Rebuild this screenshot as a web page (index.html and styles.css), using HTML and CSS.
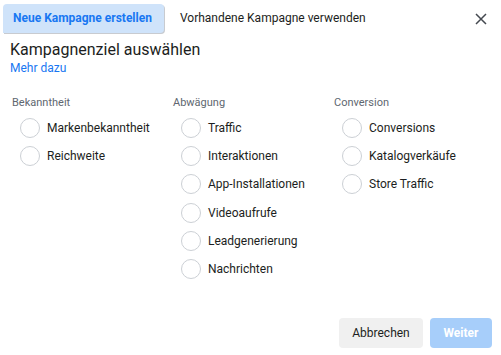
FILE: index.html
```html
<!DOCTYPE html>
<html lang="de">
<head>
<meta charset="utf-8">
<link rel="stylesheet" href="styles.css">
</head>
<body>
<div class="dialog">
  <div class="header">
    <div class="tab active">Neue Kampagne erstellen</div>
    <div class="tab">Vorhandene Kampagne verwenden</div>
    <div class="close">
      <svg width="12" height="12" viewBox="0 0 12 12"><path d="M1 1 L11 11 M11 1 L1 11" stroke="#444950" stroke-width="1.5" fill="none"/></svg>
    </div>
  </div>
  <div class="title">Kampagnenziel auswählen</div>
  <a class="more">Mehr dazu</a>
  <div class="columns">
    <div class="col">
      <div class="label">Bekanntheit</div>
      <div class="opt"><span class="radio"></span>Markenbekanntheit</div>
      <div class="opt"><span class="radio"></span>Reichweite</div>
    </div>
    <div class="col">
      <div class="label">Abwägung</div>
      <div class="opt"><span class="radio"></span>Traffic</div>
      <div class="opt"><span class="radio"></span>Interaktionen</div>
      <div class="opt"><span class="radio"></span>App-Installationen</div>
      <div class="opt"><span class="radio"></span>Videoaufrufe</div>
      <div class="opt"><span class="radio"></span>Leadgenerierung</div>
      <div class="opt"><span class="radio"></span>Nachrichten</div>
    </div>
    <div class="col">
      <div class="label">Conversion</div>
      <div class="opt"><span class="radio"></span>Conversions</div>
      <div class="opt"><span class="radio"></span>Katalogverkäufe</div>
      <div class="opt"><span class="radio"></span>Store Traffic</div>
    </div>
  </div>
  <div class="footer">
    <button class="btn cancel">Abbrechen</button>
    <button class="btn next">Weiter</button>
  </div>
</div>
</body>
</html>
```
FILE: styles.css
```css
html, body {
  margin: 0;
  padding: 0;
  background: #fff;
}
body {
  font-family: Roboto, "Liberation Sans", sans-serif;
  color: #1c1e21;
  width: 501px;
  height: 355px;
  overflow: hidden;
}
.dialog {
  display: flex;
  flex-direction: column;
  height: 355px;
}
.header {
  display: flex;
  align-items: center;
  padding: 4px 0 0 3px;
  height: 29px;
}
.tab {
  height: 29px;
  line-height: 29px;
  font-size: 12px;
  padding: 0 16px;
  color: #1c1e21;
}
.tab.active {
  background: #cfe3fa;
  color: #1877f2;
  font-weight: bold;
  padding: 0 12px 0 10px;
  border-radius: 4px 4px 4px 0;
  box-shadow: 1px 1px 0 #c8cbd0;
}
.close {
  margin-left: auto;
  margin-right: 14px;
  display: flex;
  align-items: center;
}
.title {
  font-size: 16px;
  padding: 7px 0 0 10px;
  line-height: 20px;
}
.more {
  font-size: 12px;
  color: #1877f2;
  padding-left: 10px;
  line-height: 16px;
  font-weight: 400;
}
.columns {
  display: flex;
  padding: 20px 0 0 12px;
}
.col {
  width: 161px;
}
.label {
  font-size: 11px;
  color: #606770;
  line-height: 14px;
  margin-bottom: 4px;
}
.opt {
  display: flex;
  align-items: center;
  height: 28.2px;
  font-size: 12px;
  padding-left: 8px;
}
.radio {
  width: 20px;
  height: 20px;
  border: 1px solid #ccd0d5;
  border-radius: 50%;
  margin-right: 7px;
  box-sizing: border-box;
  flex: none;
}
.footer {
  margin-top: auto;
  display: flex;
  justify-content: flex-end;
  gap: 7px;
  padding: 0 9px 7px 0;
}
.btn {
  border: none;
  border-radius: 4px;
  height: 30px;
  font-family: Roboto, "Liberation Sans", sans-serif;
  font-size: 12px;
}
.cancel {
  background: #f0f0f0;
  color: #1c1e21;
  width: 84px;
}
.next {
  background: #a7cefa;
  color: #fff;
  font-weight: bold;
  width: 62px;
}
```
